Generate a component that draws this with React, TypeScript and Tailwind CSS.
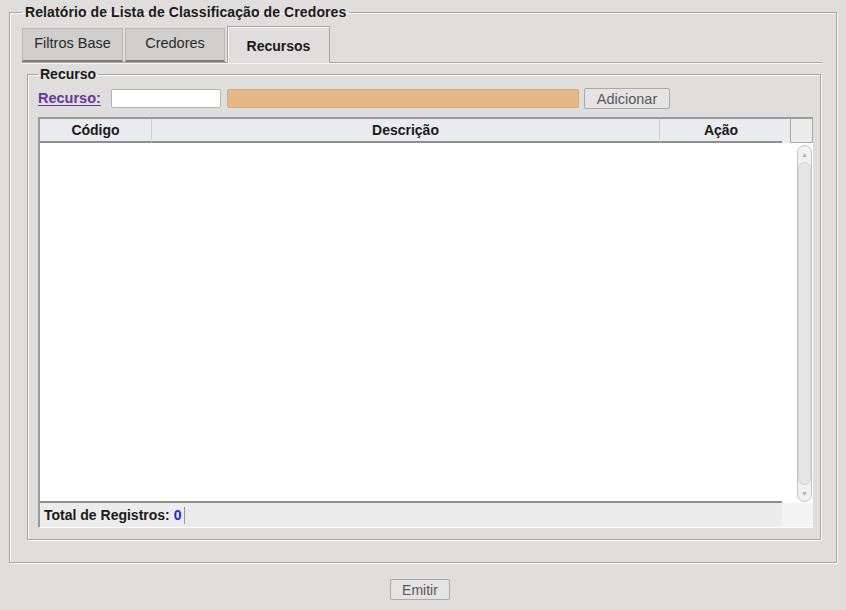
import React from 'react';

function Scrollbar() {
  return (
    <div className="absolute right-[1px] top-[2px] bottom-[1px] w-[15px] rounded-full border border-[#c4c4c4] bg-[#f1f1f1] flex flex-col">
      <div className="h-[16px] flex items-center justify-center text-[7px] leading-none text-[#b0b0b0]">▲</div>
      <div className="flex-1 rounded-full border border-[#d2d2d2] bg-[#e6e6e6]" />
      <div className="h-[16px] flex items-center justify-center text-[7px] leading-none text-[#b0b0b0]">▼</div>
    </div>
  );
}

export default function App() {
  return (
    <div className="w-[846px] h-[610px] bg-[#dfdedc] pt-[5px] flex flex-col font-['Liberation_Sans',Arial,sans-serif] text-[14px] text-[#1a1a1a]">
      <fieldset className="ml-[9px] w-[828px] h-[558px] border border-[#a6a5a3] shadow-[inset_1px_1px_0_#fbfbfb,1px_1px_0_#fbfbfb] pl-[12px] pr-[14px] pb-0 flex flex-col">
        <legend className="px-[3px] leading-[15px] font-bold tracking-[0.1px]">Relatório de Lista de Classificação de Credores</legend>

        <div className="mt-[7px] h-[36px] flex items-end gap-[2px] border-b border-[#a6a5a3] shadow-[0_1px_0_#f7f7f7]">
          <div className="w-[101px] h-[34px] bg-[#d0cfcd] border border-[#b8b7b5] border-b-2 border-b-[#7e7e7e] flex items-center justify-center pb-px text-[14.5px] text-[#2a2a2a]">
            Filtros Base
          </div>
          <div className="w-[100px] h-[34px] bg-[#d0cfcd] border border-[#b8b7b5] border-b-2 border-b-[#7e7e7e] flex items-center justify-center pb-px text-[14.5px] text-[#2a2a2a]">
            Credores
          </div>
          <div className="-mb-px w-[103px] h-[37px] bg-[#dfdedc] border border-b-0 border-[#a6a5a3] shadow-[inset_1px_1px_0_#f7f7f7] flex items-center justify-center pt-[2px] font-bold">
            Recursos
          </div>
        </div>

        <fieldset className="mt-[4px] ml-[5px] mr-[1px] h-[473px] border border-[#a6a5a3] shadow-[inset_1px_1px_0_#fbfbfb,1px_1px_0_#fbfbfb] pl-[10px] pr-[7px] flex flex-col">
          <legend className="px-[2px] leading-[15px] font-bold">Recurso</legend>

          <div className="mt-[6px] h-[21px] flex items-center">
            <a className="w-[73px] font-bold text-[14.5px] text-[#64389a] underline underline-offset-2 cursor-pointer">Recurso:</a>
            <div className="w-[110px] h-[19px] bg-white border border-[#b3b3b3] rounded-[2px]" />
            <div className="ml-[6px] w-[352px] h-[19px] bg-[#e5b987] border border-[#cfae86] rounded-[2px]" />
            <button className="ml-[5px] w-[86px] h-[21px] bg-[#e4e4e4] border border-[#a9a9a9] rounded-[2px] text-[14.5px] text-[#585858]">
              Adicionar
            </button>
          </div>

          <div className="mt-[8px] w-[775px] flex flex-col border-l-2 border-t-2 border-[#9c9c9c] border-b border-b-white">
            <div className="h-[24px] flex bg-[#e9ebee] font-bold">
              <div className="w-[112px] flex items-center justify-center border-r border-[#cfd1d4] border-b-2 border-b-[#8f8f8f]">Código</div>
              <div className="w-[508px] flex items-center justify-center border-r border-[#cfd1d4] border-b-2 border-b-[#8f8f8f]">Descrição</div>
              <div className="w-[122px] flex items-center justify-center border-b-2 border-b-[#8f8f8f]">Ação</div>
              <div className="w-[8px] bg-[#ececec]" />
              <div className="flex-1 bg-[#ececec] border border-t-0 border-[#a9a9a9]" />
            </div>

            <div className="relative h-[360px] bg-white">
              <div className="absolute left-0 bottom-0 w-[742px] h-[2px] bg-[#8f8f8f]" />
              <Scrollbar />
            </div>

            <div className="h-[24px] flex">
              <div className="w-[742px] bg-[#ececec] flex items-center pl-[4px]">
                <span className="font-bold pr-[3px] border-r border-[#9a9a9a] leading-[17px]">
                  Total de Registros: <span className="text-[#2323d6]">0</span>
                </span>
              </div>
              <div className="flex-1 bg-[#f4f4f4]" />
            </div>
          </div>
        </fieldset>
      </fieldset>

      <div className="mt-[16px] flex justify-center pr-[6px]">
        <button className="w-[60px] h-[21px] bg-[#e4e4e4] border border-[#a9a9a9] rounded-[2px] text-[#585858]">Emitir</button>
      </div>
    </div>
  );
}
